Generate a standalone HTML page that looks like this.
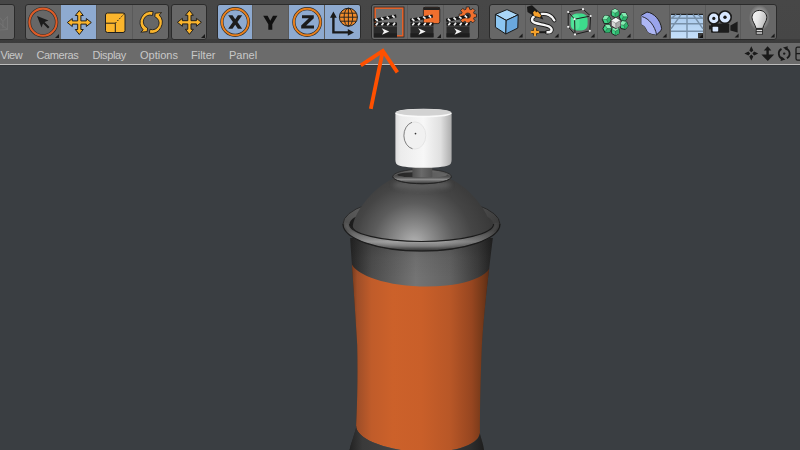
<!DOCTYPE html>
<html><head><meta charset="utf-8">
<style>
html,body{margin:0;padding:0;}
body{width:800px;height:450px;overflow:hidden;position:relative;background:#3a3e42;font-family:"Liberation Sans",sans-serif;}
#tb{position:absolute;left:0;top:0;width:800px;height:43px;background:linear-gradient(#474747 0,#464646 39px,#3c3c3c 39.5px,#3b3b3b 43px);}
.grp{position:absolute;top:4px;height:36px;border:1px solid #2b2b2b;border-radius:3px;background:#676767;box-sizing:border-box;overflow:hidden;}
.btn{position:absolute;top:0;height:34px;}
.sel{background:#8eaad0;}
.div{border-left:1px solid #5a5a5a;}
#mb{position:absolute;left:0;top:43px;width:800px;height:21px;background:#6b6b6b;}
#line{position:absolute;left:0;top:64px;width:800px;height:1px;background:#bdbdbd;}
#line2{position:absolute;left:0;top:65px;width:800px;height:1px;background:#33363a;}
.mi{position:absolute;top:49px;font-size:11px;color:#c8c8c8;}
svg{position:absolute;left:0;top:0;}
</style></head><body>
<div id="tb">
  <div class="grp" style="left:-10px;width:25px;"></div>
  <div class="grp" style="left:25px;width:144px;">
    <div class="btn" style="left:0;width:34.5px;"></div>
    <div class="btn sel" style="left:34.5px;width:35.7px;"></div>
    <div class="btn div" style="left:70.2px;width:35.4px;"></div>
    <div class="btn div" style="left:105.6px;width:37px;"></div>
  </div>
  <div class="grp" style="left:171px;width:36px;"></div>
  <div class="grp" style="left:217px;width:144px;">
    <div class="btn sel" style="left:0;width:34px;"></div>
    <div class="btn div" style="left:34px;width:36px;"></div>
    <div class="btn sel div" style="left:70px;width:36px;"></div>
    <div class="btn sel div" style="left:106px;width:37px;"></div>
  </div>
  <div class="grp" style="left:371px;width:108px;">
    <div class="btn" style="left:0;width:35px;"></div>
    <div class="btn div" style="left:35px;width:36px;"></div>
    <div class="btn div" style="left:71px;width:36px;"></div>
  </div>
  <div class="grp" style="left:489px;width:288px;">
    <div class="btn" style="left:0;width:35.4px;"></div>
    <div class="btn div" style="left:35.4px;width:35.8px;"></div>
    <div class="btn div" style="left:71.2px;width:35.8px;"></div>
    <div class="btn div" style="left:107px;width:35.9px;"></div>
    <div class="btn div" style="left:142.9px;width:35.8px;"></div>
    <div class="btn div" style="left:178.7px;width:35.9px;"></div>
    <div class="btn div" style="left:214.6px;width:35.8px;"></div>
    <div class="btn div" style="left:250.4px;width:36px;"></div>
  </div>
</div>
<div id="mb"></div>
<div id="line"></div>
<div id="line2"></div>
<div class="mi" style="left:0.5px;letter-spacing:-0.5px;">View</div>
<div class="mi" style="left:36.5px;letter-spacing:-0.4px;">Cameras</div>
<div class="mi" style="left:92.5px;letter-spacing:-0.4px;">Display</div>
<div class="mi" style="left:140px;">Options</div>
<div class="mi" style="left:191px;">Filter</div>
<div class="mi" style="left:229px;">Panel</div>

<svg width="800" height="450" viewBox="0 0 800 450">
<defs>
  <path id="mv" d="M0,-12 L4,-7 L1.6,-7 L1.6,-1.6 L7,-1.6 L7,-4 L12,0 L7,4 L7,1.6 L1.6,1.6 L1.6,7 L4,7 L0,12 L-4,7 L-1.6,7 L-1.6,1.6 L-7,1.6 L-7,4 L-12,0 L-7,-4 L-7,-1.6 L-1.6,-1.6 L-1.6,-7 L-4,-7 Z"/>
  <path id="tri" d="M0,0 L4,-4 L4,0 Z"/>
  <g id="clap">
    <rect x="0" y="0" width="23" height="11" fill="#2a2a2a"/>
    <rect x="0" y="7" width="23" height="4" fill="#1e1e1e"/>
    <path d="M7.7,1.9 L15.2,5.2 L8,8.5 L9.9,5.2 Z" fill="#f2f2f2"/>
    <rect x="0" y="-3.8" width="23" height="3.2" fill="#111"/>
    <path d="M1.8,-1 L3.8,-3.4 M7.5,-1 L9.5,-3.4 M13.2,-1 L15.2,-3.4 M19,-1 L21,-3.4" stroke="#eee" stroke-width="1.7"/>
    <g transform="translate(0,-4.4) rotate(-11)">
      <rect x="0" y="-3.1" width="23" height="3.1" fill="#111"/>
      <path d="M2,-2.8 L4,-0.3 M7.7,-2.8 L9.7,-0.3 M13.4,-2.8 L15.4,-0.3 M19.1,-2.8 L21.1,-0.3" stroke="#eee" stroke-width="1.7"/>
    </g>
  </g>
</defs>

<!-- partial left group icon -->
<path d="M0,17.5 L3,21.5 L7.5,16.5 L7.5,29.5 L0,30 M0,23.5 L7.5,29.5 M3,21.5 L3,28" fill="none" stroke="#747474" stroke-width="0.9"/>

<!-- select -->
<circle cx="43" cy="22.2" r="13.6" fill="none" stroke="#2a2a2a" stroke-width="3.3"/>
<circle cx="43" cy="22.2" r="13.6" fill="none" stroke="#dd5c28" stroke-width="2.1"/>
<path d="M37,16 L48.5,20.5 L44.5,22 L49.5,27 L48,28.5 L43,23.5 L41.5,27.5 Z" fill="#1c1c1c"/>
<use href="#tri" transform="translate(55,38)" fill="#1a1a1a"/>

<!-- move (selected) -->
<use href="#mv" transform="translate(79.3,22.5)" fill="#fbb52c" stroke="#1e1e1e" stroke-width="1"/>

<!-- scale -->
<rect x="105.5" y="13" width="19.5" height="19.5" rx="2" fill="#fbb52c" stroke="#1e1e1e" stroke-width="1"/>
<path d="M105.5,23.2 L115.3,23.2 L115.3,32.5" fill="none" stroke="#1e1e1e" stroke-width="1"/>
<path d="M115.3,23.2 L124.5,13.5" fill="none" stroke="#1e1e1e" stroke-width="1" stroke-dasharray="1.6,1.4"/>

<!-- rotate -->
<g transform="translate(151.2,22.4)" fill="#fbb52c" stroke="#1e1e1e" stroke-width="0.9">
  <path id="rotp" d="M1.91,-10.83 A11,11 0 0 0 -8.04,7.5 L-10.4,9.8 L-4,9.2 L-3.6,5.6 A6.66,6.66 0 0 1 1.22,-6.89 Z"/>
  <use href="#rotp" transform="rotate(180)"/>
</g>

<!-- move group 3 -->
<use href="#mv" transform="translate(189.4,22.3)" fill="#fbb52c" stroke="#1e1e1e" stroke-width="1"/>
<use href="#tri" transform="translate(201,38)" fill="#1a1a1a"/>

<!-- X -->
<circle cx="235.2" cy="22" r="13.3" fill="none" stroke="#2a2a2a" stroke-width="3.2"/>
<circle cx="235.2" cy="22" r="13.3" fill="none" stroke="#e8801e" stroke-width="2"/>
<path d="M228.2,15.2 L232.5,15.2 L235.2,19.2 L237.9,15.2 L242.2,15.2 L237.5,22.0 L242.2,28.8 L237.9,28.8 L235.2,24.8 L232.5,28.8 L228.2,28.8 L232.9,22.0 Z" fill="#1c1c1c"/>
<!-- Y -->
<path d="M263.2,15.8 L267.6,15.8 L270.3,20.7 L273.0,15.8 L277.4,15.8 L272.3,24.2 L272.3,29.8 L268.3,29.8 L268.3,24.2 Z" fill="#111"/>
<!-- Z -->
<circle cx="307.2" cy="22" r="13.3" fill="none" stroke="#2a2a2a" stroke-width="3.2"/>
<circle cx="307.2" cy="22" r="13.3" fill="none" stroke="#e8801e" stroke-width="2"/>
<path d="M302.0,15.2 L313.8,15.2 L313.8,18.2 L306.2,25.4 L314.0,25.4 L314.0,28.4 L301.2,28.4 L301.2,25.4 L308.8,18.2 L302.0,18.2 Z" fill="#1c1c1c"/>
<!-- world -->
<circle cx="348.4" cy="17.2" r="9" fill="#f08a2a" stroke="#1e1e1e" stroke-width="1"/>
<g fill="none" stroke="#1e1e1e" stroke-width="0.9">
  <ellipse cx="348.4" cy="17.2" rx="4.3" ry="9"/>
  <path d="M348.4,8.2 V26.2 M339.4,17.2 H357.4 M340.5,13.2 H356.3 M340.5,21.2 H356.3"/>
</g>
<path d="M333.4,17 V32.4 H348.5" fill="none" stroke="#1a1a1a" stroke-width="2.4"/>
<path d="M333.4,11.6 L336.8,17.8 L330,17.8 Z M354,32.4 L347.8,29 L347.8,35.8 Z" fill="#1a1a1a"/>

<!-- clapper 1 -->
<rect x="375.2" y="8.2" width="27.6" height="27.6" fill="none" stroke="#262626" stroke-width="3.2"/>
<rect x="375.2" y="8.2" width="27.6" height="27.6" fill="#6f6f6f" stroke="#e2622a" stroke-width="1.6"/>
<use href="#clap" transform="translate(374,26.3)"/>
<!-- clapper 2 -->
<rect x="423.4" y="7.2" width="16.4" height="16.4" rx="2" fill="#ef6f2e" stroke="#1e1e1e" stroke-width="0.8"/>
<rect x="423.4" y="7.2" width="16.4" height="2.8" fill="#222"/>
<use href="#clap" transform="translate(410.5,26.3)"/>
<use href="#tri" transform="translate(437,38)" fill="#1a1a1a"/>
<!-- clapper 3 -->
<g transform="translate(467.8,15.6)">
  <path d="M-1.82,-6.34 L-1.53,-8.67 L1.53,-8.67 L1.82,-6.34 L3.20,-5.77 L5.05,-7.21 L7.21,-5.05 L5.77,-3.20 L6.34,-1.82 L8.67,-1.53 L8.67,1.53 L6.34,1.82 L5.77,3.20 L7.21,5.05 L5.05,7.21 L3.20,5.77 L1.82,6.34 L1.53,8.67 L-1.53,8.67 L-1.82,6.34 L-3.20,5.77 L-5.05,7.21 L-7.21,5.05 L-5.77,3.20 L-6.34,1.82 L-8.67,1.53 L-8.67,-1.53 L-6.34,-1.82 L-5.77,-3.20 L-7.21,-5.05 L-5.05,-7.21 L-3.20,-5.77 Z" fill="#ef6f2e" stroke="#222" stroke-width="0.8" stroke-linejoin="round"/>
  <circle r="2.7" fill="#3c3c3c" stroke="#222" stroke-width="0.6"/>
</g>
<use href="#clap" transform="translate(446.5,26.3)"/>

<!-- cube -->
<g stroke="#1a1a1a" stroke-width="1" stroke-linejoin="round">
  <path d="M507,9.6 L518.2,14.8 L506.2,20.4 L495.4,14.4 Z" fill="#a9d6f7"/>
  <path d="M495.4,14.4 L506.2,20.4 L505.8,34 L495.4,27.2 Z" fill="#8cc6f2"/>
  <path d="M506.2,20.4 L518.2,14.8 L517.8,28 L505.8,34 Z" fill="#6aa8de"/>
</g>
<use href="#tri" transform="translate(518.6,37.6)" fill="#1a1a1a"/>

<!-- spline pen -->
<path d="M554.3,20.3 C552.5,15.5 547,13.2 541,14 C536,14.5 531,17 532.2,20.8 C533.5,24.2 544,24 549,26.5 C553,28.8 552.5,32.5 547,32.3" fill="none" stroke="#1a1a1a" stroke-width="4.2" stroke-linecap="round"/>
<path d="M554.3,20.3 C552.5,15.5 547,13.2 541,14 C536,14.5 531,17 532.2,20.8 C533.5,24.2 544,24 549,26.5 C553,28.8 552.5,32.5 547,32.3" fill="none" stroke="#f6f6f6" stroke-width="2.4" stroke-linecap="round"/>
<path d="M546.5,32.2 L539,32.2" stroke="#1a1a1a" stroke-width="2"/>
<path d="M527,6.7 L532,5.2 L540.5,13.2 L543.4,19.4 L535,16.8 L527.5,12 Z" fill="#1a1a1a"/>
<path d="M533,12.6 L535,10.6 L536,12.4 L537.6,11.6 L541,15.2 L540.2,17.6 L534,15.8 Z" fill="#f5a02c"/>
<path d="M531.4,32 H538.6 M535,28.4 V35.6" stroke="#1e1e1e" stroke-width="3.8"/>
<path d="M530.8,32 H539.2 M535,27.8 V36.2" stroke="#f5a12a" stroke-width="2.3"/>
<use href="#tri" transform="translate(554.6,37.6)" fill="#1a1a1a"/>

<!-- hypernurbs -->
<rect x="570.6" y="13.6" width="17" height="17" rx="6" fill="#3ddc8c"/>
<rect x="571.5" y="14.5" width="8" height="15" rx="4" fill="#6aeaa8" opacity="0.5"/>
<g fill="none" stroke="#1e1e1e" stroke-width="1">
  <path d="M568.2,12 L583,9.2 L590.6,16 L574.6,19.2 Z M568.2,12 L568.2,26.8 L575,34.4 L574.6,19.2 M575,34.4 L589.8,30.8 L590.6,16"/>
</g>
<g fill="#f2f2f2">
  <circle cx="568.2" cy="12" r="1.1"/><circle cx="583" cy="9.2" r="1.1"/><circle cx="590.6" cy="16" r="1.1"/>
  <circle cx="574.6" cy="19.2" r="1.1"/><circle cx="568.2" cy="26.8" r="1.1"/><circle cx="575" cy="34.4" r="1.1"/><circle cx="589.8" cy="30.8" r="1.1"/>
</g>
<use href="#tri" transform="translate(590.6,37.6)" fill="#1a1a1a"/>

<!-- cloner -->
<g transform="translate(615,13.2) rotate(0)"><path d="M0.00,-4.41 L3.80,-2.20 L3.80,2.20 L0.00,4.41 L-3.80,2.20 L-3.80,-2.20 Z" fill="#3fd688" stroke="#1a1a1a" stroke-width="0.9" stroke-linejoin="round"/><path d="M-3.80,-2.20 L0.00,-4.41 L3.80,-2.20 L0.00,0.00 Z" fill="#86eeb4"/><path d="M0.00,0.00 L3.80,-2.20 L3.80,2.20 L0.00,4.41 Z" fill="#2eb36c"/><path d="M-3.80,-2.20 L0,0 L3.80,-2.20 M0,0 L0,4.41" fill="none" stroke="#1a1a1a" stroke-width="0.5" opacity="0.6"/></g>
<g transform="translate(623.4,16.8) rotate(30)"><path d="M0.00,-4.41 L3.80,-2.20 L3.80,2.20 L0.00,4.41 L-3.80,2.20 L-3.80,-2.20 Z" fill="#3fd688" stroke="#1a1a1a" stroke-width="0.9" stroke-linejoin="round"/><path d="M-3.80,-2.20 L0.00,-4.41 L3.80,-2.20 L0.00,0.00 Z" fill="#86eeb4"/><path d="M0.00,0.00 L3.80,-2.20 L3.80,2.20 L0.00,4.41 Z" fill="#2eb36c"/><path d="M-3.80,-2.20 L0,0 L3.80,-2.20 M0,0 L0,4.41" fill="none" stroke="#1a1a1a" stroke-width="0.5" opacity="0.6"/></g>
<g transform="translate(623.8,25.2) rotate(-20)"><path d="M0.00,-4.41 L3.80,-2.20 L3.80,2.20 L0.00,4.41 L-3.80,2.20 L-3.80,-2.20 Z" fill="#3fd688" stroke="#1a1a1a" stroke-width="0.9" stroke-linejoin="round"/><path d="M-3.80,-2.20 L0.00,-4.41 L3.80,-2.20 L0.00,0.00 Z" fill="#86eeb4"/><path d="M0.00,0.00 L3.80,-2.20 L3.80,2.20 L0.00,4.41 Z" fill="#2eb36c"/><path d="M-3.80,-2.20 L0,0 L3.80,-2.20 M0,0 L0,4.41" fill="none" stroke="#1a1a1a" stroke-width="0.5" opacity="0.6"/></g>
<g transform="translate(615.4,31.2) rotate(0)"><path d="M0.00,-4.41 L3.80,-2.20 L3.80,2.20 L0.00,4.41 L-3.80,2.20 L-3.80,-2.20 Z" fill="#3fd688" stroke="#1a1a1a" stroke-width="0.9" stroke-linejoin="round"/><path d="M-3.80,-2.20 L0.00,-4.41 L3.80,-2.20 L0.00,0.00 Z" fill="#86eeb4"/><path d="M0.00,0.00 L3.80,-2.20 L3.80,2.20 L0.00,4.41 Z" fill="#2eb36c"/><path d="M-3.80,-2.20 L0,0 L3.80,-2.20 M0,0 L0,4.41" fill="none" stroke="#1a1a1a" stroke-width="0.5" opacity="0.6"/></g>
<g transform="translate(607.2,28.6) rotate(30)"><path d="M0.00,-4.41 L3.80,-2.20 L3.80,2.20 L0.00,4.41 L-3.80,2.20 L-3.80,-2.20 Z" fill="#3fd688" stroke="#1a1a1a" stroke-width="0.9" stroke-linejoin="round"/><path d="M-3.80,-2.20 L0.00,-4.41 L3.80,-2.20 L0.00,0.00 Z" fill="#86eeb4"/><path d="M0.00,0.00 L3.80,-2.20 L3.80,2.20 L0.00,4.41 Z" fill="#2eb36c"/><path d="M-3.80,-2.20 L0,0 L3.80,-2.20 M0,0 L0,4.41" fill="none" stroke="#1a1a1a" stroke-width="0.5" opacity="0.6"/></g>
<g transform="translate(606.6,19.6) rotate(-25)"><path d="M0.00,-4.41 L3.80,-2.20 L3.80,2.20 L0.00,4.41 L-3.80,2.20 L-3.80,-2.20 Z" fill="#3fd688" stroke="#1a1a1a" stroke-width="0.9" stroke-linejoin="round"/><path d="M-3.80,-2.20 L0.00,-4.41 L3.80,-2.20 L0.00,0.00 Z" fill="#86eeb4"/><path d="M0.00,0.00 L3.80,-2.20 L3.80,2.20 L0.00,4.41 Z" fill="#2eb36c"/><path d="M-3.80,-2.20 L0,0 L3.80,-2.20 M0,0 L0,4.41" fill="none" stroke="#1a1a1a" stroke-width="0.5" opacity="0.6"/></g>
<g transform="translate(615.8,23.2) rotate(0)"><path d="M0.00,-5.45 L4.70,-2.73 L4.70,2.73 L0.00,5.45 L-4.70,2.73 L-4.70,-2.73 Z" fill="#d6d6d6" stroke="#1a1a1a" stroke-width="0.9" stroke-linejoin="round"/><path d="M-4.70,-2.73 L0.00,-5.45 L4.70,-2.73 L0.00,0.00 Z" fill="#f4f4f4"/><path d="M0.00,0.00 L4.70,-2.73 L4.70,2.73 L0.00,5.45 Z" fill="#a8a8a8"/><path d="M-4.70,-2.73 L0,0 L4.70,-2.73 M0,0 L0,5.45" fill="none" stroke="#1a1a1a" stroke-width="0.5" opacity="0.6"/></g>
<use href="#tri" transform="translate(626.6,37.6)" fill="#1a1a1a"/>

<!-- bend -->
<path d="M641.4,15.2 L647,12 C654,13 660.5,20 661.6,28.5 L661,30.6 L656.6,34.8 C653,34.2 650,33.5 647.8,32 C646.5,28.5 644.5,25.5 641.4,24.2 Z" fill="#9aa4ec" stroke="#1e1e1e" stroke-width="1"/>
<path d="M641.4,15.2 L642.2,16.6 C649,18.5 655,26 656.6,34.8 C653,34.2 650,33.5 647.8,32 C646.5,28.5 644.5,25.5 641.4,24.2 Z" fill="#adb6f4"/>
<path d="M642.2,16.6 C649,18.5 655,26 656.6,34.8" fill="none" stroke="#1e1e1e" stroke-width="0.9"/>
<use href="#tri" transform="translate(662.6,37.6)" fill="#1a1a1a"/>

<!-- floor -->
<defs><linearGradient id="flg" x1="0" y1="0" x2="0" y2="1"><stop offset="0" stop-color="#a9c9ec"/><stop offset="1" stop-color="#c6e0fa"/></linearGradient></defs>
<rect x="671" y="14.5" width="32" height="23.9" fill="url(#flg)"/>
<rect x="671" y="13.8" width="32" height="1.2" fill="#222"/>
<g stroke="#7890a8" stroke-width="1.4" fill="none">
  <path d="M671,18.2 H703 M671,23.8 H703 M671,31.2 H703 M687,14.5 V38.4 M681,14.5 L671,28.8 M693,14.5 L703,28.8 M676.2,14.5 L671,18.6 M697.8,14.5 L703,18.6"/>
</g>
<rect x="698" y="33" width="5" height="5.4" fill="#3a3a3a"/>
<use href="#tri" transform="translate(699,38)" fill="#111"/>

<!-- camera -->
<g>
  <circle cx="713.8" cy="18.4" r="5.6" fill="#d9e8ff" stroke="#1a1a1a" stroke-width="1.6"/>
  <circle cx="713.8" cy="18.4" r="1.6" fill="#1a1a1a"/>
  <circle cx="725" cy="17.2" r="6.2" fill="#d9e8ff" stroke="#1a1a1a" stroke-width="1.6"/>
  <circle cx="725" cy="17.2" r="1.7" fill="#1a1a1a"/>
  <rect x="711" y="23.4" width="18.2" height="9.4" rx="1" fill="#1c1c1c"/>
  <rect x="709" y="25.4" width="3" height="4" fill="#1c1c1c"/>
  <path d="M730.4,25.6 L737.6,21.4 L737.6,32.4 L730.4,30.6 Z" fill="#1c1c1c"/>
  <rect x="712.6" y="26.8" width="5.6" height="4.8" rx="0.8" fill="#d9e8ff"/>
</g>
<use href="#tri" transform="translate(734.6,37.6)" fill="#1a1a1a"/>

<!-- light -->
<defs>
  <radialGradient id="glow" cx="0.5" cy="0.5" r="0.5"><stop offset="0.6" stop-color="#fff" stop-opacity="0.35"/><stop offset="1" stop-color="#fff" stop-opacity="0"/></radialGradient>
  <linearGradient id="bulb" x1="0" y1="0" x2="1" y2="0.3"><stop offset="0" stop-color="#f4f4f4"/><stop offset="0.5" stop-color="#e6e6e6"/><stop offset="1" stop-color="#bdbdbd"/></linearGradient>
</defs>
<ellipse cx="759.4" cy="18" rx="10.5" ry="13" fill="url(#glow)"/>
<path d="M759.4,10.4 C763.8,10.4 766.8,13.6 766.8,17.6 C766.8,21.4 763.6,24 762.8,28.4 L756,28.4 C755.2,24 752,21.4 752,17.6 C752,13.6 755,10.4 759.4,10.4 Z" fill="url(#bulb)" stroke="#1e1e1e" stroke-width="1"/>
<rect x="756.2" y="29.4" width="6.4" height="2.4" fill="#dcdcdc" stroke="#1e1e1e" stroke-width="0.8"/>
<rect x="756.2" y="31.8" width="6.4" height="2.4" fill="#cfcfcf" stroke="#1e1e1e" stroke-width="0.8"/>
<use href="#tri" transform="translate(770.6,37.6)" fill="#1a1a1a"/>

</svg>

<!-- ===== viewport content ===== -->
<svg width="800" height="450" viewBox="0 0 800 450">
<defs>
  <linearGradient id="bodyg" x1="350" y1="0" x2="493" y2="0" gradientUnits="userSpaceOnUse">
    <stop offset="0" stop-color="#242424"/>
    <stop offset="0.15" stop-color="#4c4c4c"/>
    <stop offset="0.46" stop-color="#747474"/>
    <stop offset="0.7" stop-color="#626262"/>
    <stop offset="0.9" stop-color="#3a3a3a"/>
    <stop offset="1" stop-color="#202020"/>
  </linearGradient>
  <linearGradient id="orng" x1="350" y1="0" x2="493" y2="0" gradientUnits="userSpaceOnUse">
    <stop offset="0" stop-color="#6a3418"/>
    <stop offset="0.05" stop-color="#9e4e28"/>
    <stop offset="0.15" stop-color="#c05c2a"/>
    <stop offset="0.3" stop-color="#cc612a"/>
    <stop offset="0.5" stop-color="#c95f29"/>
    <stop offset="0.7" stop-color="#b85727"/>
    <stop offset="0.85" stop-color="#974620"/>
    <stop offset="0.93" stop-color="#733819"/>
    <stop offset="1" stop-color="#4a2412"/>
  </linearGradient>
  <linearGradient id="baseg" x1="349" y1="0" x2="484" y2="0" gradientUnits="userSpaceOnUse">
    <stop offset="0" stop-color="#222"/>
    <stop offset="0.1" stop-color="#3a3a3a"/>
    <stop offset="0.45" stop-color="#484848"/>
    <stop offset="0.9" stop-color="#2e2e2e"/>
    <stop offset="1" stop-color="#1e1e1e"/>
  </linearGradient>
  <radialGradient id="domeg" cx="414" cy="244" r="82" gradientUnits="userSpaceOnUse">
    <stop offset="0" stop-color="#b4b4b4"/>
    <stop offset="0.22" stop-color="#8c8c8c"/>
    <stop offset="0.5" stop-color="#5c5c5c"/>
    <stop offset="0.72" stop-color="#454545"/>
    <stop offset="1" stop-color="#383838"/>
  </radialGradient>
  <filter id="blur2" x="-50%" y="-50%" width="200%" height="200%"><feGaussianBlur stdDeviation="2"/></filter>
  <linearGradient id="rimg" x1="343" y1="0" x2="501" y2="0" gradientUnits="userSpaceOnUse">
    <stop offset="0" stop-color="#4a4a4a"/>
    <stop offset="0.4" stop-color="#787878"/>
    <stop offset="0.7" stop-color="#666"/>
    <stop offset="1" stop-color="#404040"/>
  </linearGradient>
  <linearGradient id="capg" x1="395" y1="0" x2="452" y2="0" gradientUnits="userSpaceOnUse">
    <stop offset="0" stop-color="#dadada"/>
    <stop offset="0.1" stop-color="#ececec"/>
    <stop offset="0.5" stop-color="#f7f7f7"/>
    <stop offset="0.8" stop-color="#e0e0e0"/>
    <stop offset="1" stop-color="#ababab"/>
  </linearGradient>
  <linearGradient id="stemg" x1="412" y1="0" x2="433" y2="0" gradientUnits="userSpaceOnUse">
    <stop offset="0" stop-color="#4a4a4a"/>
    <stop offset="0.45" stop-color="#6a6a6a"/>
    <stop offset="1" stop-color="#505050"/>
  </linearGradient>
  <linearGradient id="ringg" x1="393" y1="0" x2="452" y2="0" gradientUnits="userSpaceOnUse">
    <stop offset="0" stop-color="#505050"/>
    <stop offset="0.45" stop-color="#727272"/>
    <stop offset="1" stop-color="#555"/>
  </linearGradient>
  <linearGradient id="shadg" x1="0" y1="238" x2="0" y2="278" gradientUnits="userSpaceOnUse">
    <stop offset="0" stop-color="#111" stop-opacity="0.25"/>
    <stop offset="0.5" stop-color="#111" stop-opacity="0.06"/>
    <stop offset="1" stop-color="#111" stop-opacity="0"/>
  </linearGradient>
  <linearGradient id="rimv" x1="0" y1="205" x2="0" y2="251" gradientUnits="userSpaceOnUse">
    <stop offset="0" stop-color="#6a6a6a"/>
    <stop offset="0.55" stop-color="#5e5e5e"/>
    <stop offset="0.8" stop-color="#a2a2a2"/>
    <stop offset="0.9" stop-color="#707070"/>
    <stop offset="1" stop-color="#2e2e2e"/>
  </linearGradient>
  <linearGradient id="rimside" x1="343" y1="0" x2="500" y2="0" gradientUnits="userSpaceOnUse">
    <stop offset="0" stop-color="#000" stop-opacity="0.2"/>
    <stop offset="0.3" stop-color="#000" stop-opacity="0"/>
    <stop offset="0.6" stop-color="#000" stop-opacity="0"/>
    <stop offset="1" stop-color="#000" stop-opacity="0.4"/>
  </linearGradient>
  <linearGradient id="rimcav" x1="350" y1="0" x2="493" y2="0" gradientUnits="userSpaceOnUse">
    <stop offset="0" stop-color="#1c1c1c"/>
    <stop offset="0.6" stop-color="#2a2a2a"/>
    <stop offset="1" stop-color="#3a3a3a"/>
  </linearGradient>
  <filter id="blur1" x="-10%" y="-50%" width="120%" height="200%"><feGaussianBlur stdDeviation="0.8"/></filter>
  <linearGradient id="cavg" x1="397" y1="0" x2="447" y2="0" gradientUnits="userSpaceOnUse">
    <stop offset="0" stop-color="#262626"/>
    <stop offset="0.45" stop-color="#303030"/>
    <stop offset="0.7" stop-color="#5e5e5e"/>
    <stop offset="1" stop-color="#666"/>
  </linearGradient>
  <linearGradient id="ringv" x1="0" y1="175" x2="0" y2="184" gradientUnits="userSpaceOnUse">
    <stop offset="0" stop-color="#3e3e3e"/>
    <stop offset="0.3" stop-color="#5e5e5e"/>
    <stop offset="0.5" stop-color="#8a8a8a"/>
    <stop offset="0.75" stop-color="#5a5a5a"/>
    <stop offset="1" stop-color="#303030"/>
  </linearGradient>
  <clipPath id="bodyclip">
    <path d="M350.2,238 C351.5,262 355,305 357.2,345 C358,380 357,410 356,428 C354,436 351,443 349.5,450 L484,450 C483,443 481,438 480,434 C480,415 480,392 481.9,345 C484.5,305 489,270 492.8,238 Z"/>
  </clipPath>
</defs>

<!-- body -->
<g clip-path="url(#bodyclip)">
  <rect x="340" y="230" width="160" height="220" fill="url(#bodyg)"/>
  <path d="M330,259.56 L350.54,259.56 A70,24.5 2 0 0 490.46,264.44 L510,264.44 L510,433.29 L479.88,433.29 A62,22.5 3.5 0 1 356.12,425.71 L330,425.71 Z" fill="url(#orng)"/>
  <path d="M330,425.71 L356.12,425.71 A62,22.5 3.5 0 0 479.88,433.29 L510,433.29 L510,470 L330,470 Z" fill="url(#baseg)"/>
  <rect x="340" y="238" width="160" height="40" fill="url(#shadg)"/>
</g>

<!-- rim back -->
<ellipse cx="421.5" cy="224" rx="78.5" ry="27" fill="url(#rimv)" stroke="#262626" stroke-width="0.8"/>
<ellipse cx="421.5" cy="224" rx="78.5" ry="27" fill="url(#rimside)"/>
<ellipse cx="421.5" cy="224" rx="72" ry="17.5" fill="url(#rimcav)"/>
<!-- dome -->
<path d="M352.8,226 C354.5,211 375,186 392.8,179 Q421.5,174 450.2,179 C468,186 488.5,211 490.2,226 A68.7,15.5 0 0 1 352.8,226 Z" fill="url(#domeg)"/>
<ellipse cx="422" cy="185" rx="29" ry="5" fill="#6a6a6a" opacity="0.6" filter="url(#blur2)"/>
<!-- rim front -->
<path d="M343,224 A78.5,27 0 0 0 500,224 L493.5,224 A72,17.5 0 0 1 349.5,224 Z" fill="url(#rimv)"/>
<path d="M343,224 A78.5,27 0 0 0 500,224" fill="none" stroke="#1e1e1e" stroke-width="1.2"/>
<path d="M349.5,224 A72,17.5 0 0 0 493.5,224" fill="none" stroke="#1e1e1e" stroke-width="1.1"/>
<path d="M346.5,224 A75,21.5 0 0 0 496.5,224" fill="none" stroke="#a0a0a0" stroke-width="1.6" opacity="0.5" filter="url(#blur1)"/>
<path d="M343,224 A78.5,27 0 0 0 500,224 L493.5,224 A72,17.5 0 0 1 349.5,224 Z" fill="url(#rimside)"/>

<!-- neck ring -->
<ellipse cx="422.1" cy="176.5" rx="29.3" ry="7.2" fill="url(#ringg)" stroke="#262626" stroke-width="0.8"/>
<ellipse cx="422.1" cy="174.9" rx="25" ry="2.9" fill="url(#cavg)"/>
<rect x="412.4" y="165" width="19.9" height="12.6" fill="url(#stemg)"/>
<path d="M392.8,176.5 A29.3,7.2 0 0 0 451.4,176.5 L447.1,174.9 A25,2.9 0 0 1 397.1,174.9 Z" fill="url(#ringv)"/>
<path d="M392.8,176.5 A29.3,7.2 0 0 0 451.4,176.5" fill="none" stroke="#222" stroke-width="1"/>

<!-- cap -->
<path d="M395.4,112.5 A28.1,3.8 0 0 1 451.6,112.5 L451.6,160 Q451.6,164.5 448,165.5 A26,3.5 0 0 1 399,165.5 Q395.4,164.5 395.4,160 Z" fill="url(#capg)"/>
<ellipse cx="423.5" cy="112.5" rx="27.6" ry="3.5" fill="#d2d2d2"/>
<path d="M396,113 A27.5,3.5 0 0 0 451,113" fill="none" stroke="#fafafa" stroke-width="1.4"/>
<!-- nozzle -->
<ellipse cx="415" cy="135.5" rx="10.8" ry="13.6" fill="#f1f1f1" stroke="#dcdcdc" stroke-width="0.6"/>
<path d="M412,122.3 A10.8,13.6 0 0 0 412.5,148.8" fill="none" stroke="#777" stroke-width="0.9"/>
<circle cx="415.5" cy="133.6" r="0.85" fill="#333"/>

<!-- arrow -->
<path d="M370.8,108.8 L382.8,50.8 M360.8,65.4 L382.8,50.8 L397.4,72.4" fill="none" stroke="#ff5000" stroke-width="3.8" stroke-linejoin="miter" stroke-miterlimit="10"/>

<!-- right menu icons -->
<g fill="#1a1a1a">
  <path d="M751.3,46.3 L753.3,50.4 L751.3,52.2 L749.3,50.4 Z M751.3,60.4 L753.3,56.4 L751.3,54.6 L749.3,56.4 Z M744.4,53.4 L748.5,51.4 L750.2,53.4 L748.5,55.4 Z M758.2,53.4 L754.1,51.4 L752.4,53.4 L754.1,55.4 Z"/>
  <path d="M767.6,46.2 L771.4,50.4 L768.8,50.4 L768.8,54.6 L774.2,54.6 L767.8,61 L761.4,54.6 L766.4,54.6 L766.4,50.4 L763.8,50.4 Z"/>
</g>
<g fill="none" stroke="#1a1a1a" stroke-width="1.8">
  <path d="M781.5,48.9 A5.4,5.4 0 0 0 783.3,58.9"/>
  <path d="M786.9,58.3 A5.4,5.4 0 0 0 785.1,48.3"/>
</g>
<g fill="#1a1a1a">
  <circle cx="784.2" cy="53.6" r="1.2"/>
  <path d="M781.2,56.6 L785.4,59.6 L780.6,61 Z M787.2,50.6 L783,47.6 L787.8,46.2 Z"/>
</g>
<rect x="796" y="47.2" width="8" height="13" rx="1.6" fill="none" stroke="#1a1a1a" stroke-width="1.3"/>
<path d="M796,53.6 H804" stroke="#1a1a1a" stroke-width="1.3"/>
</svg>
</body></html>
